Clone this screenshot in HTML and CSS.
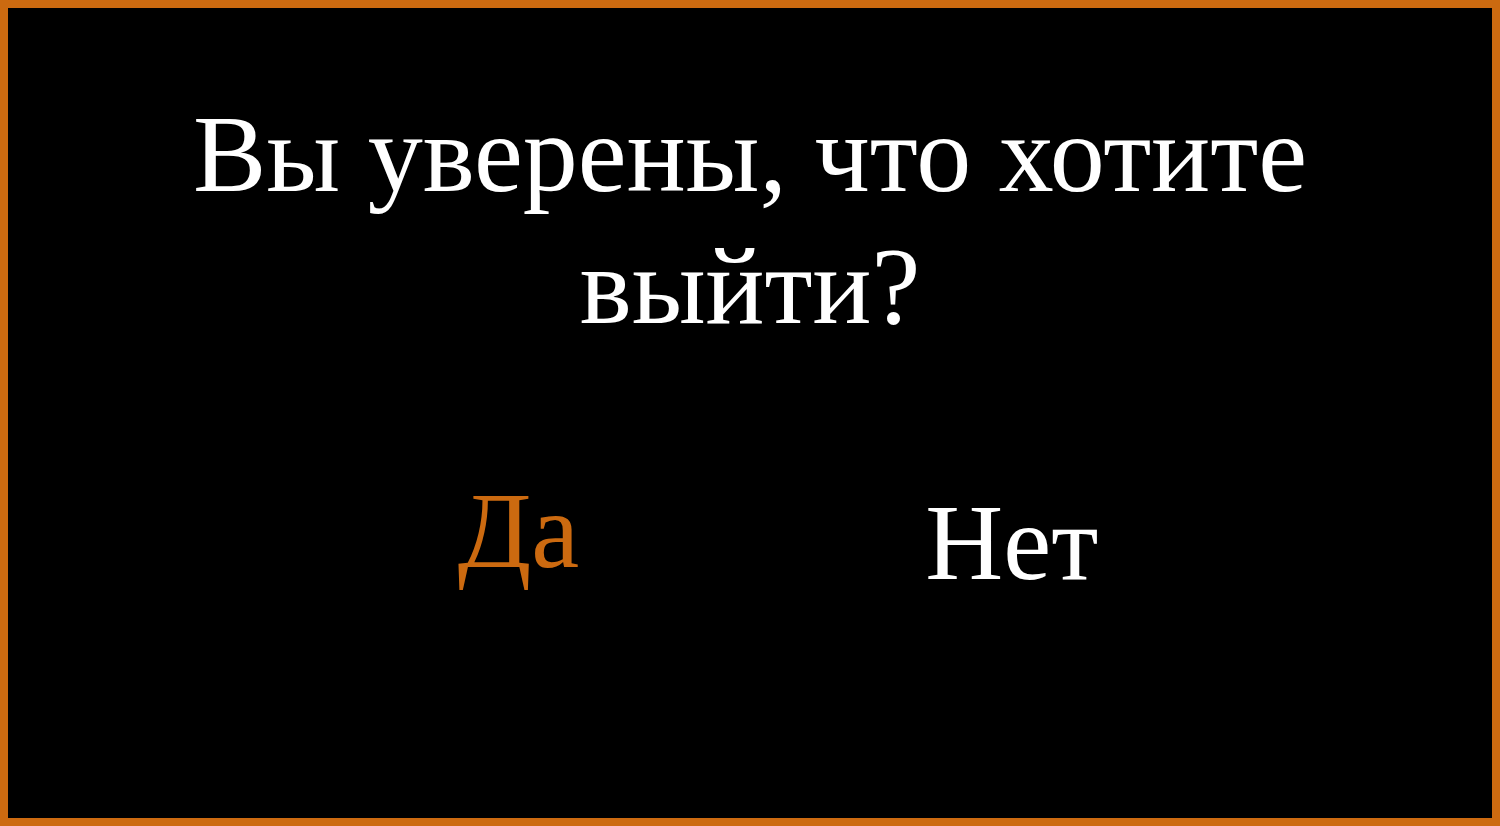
FILE: index.html
```html
<!DOCTYPE html>
<html lang="ru">
<head>
<meta charset="utf-8">
<title>Выход</title>
<link rel="stylesheet" href="styles.css">
</head>
<body>
<div class="dialog">
  <h1 class="question">Вы уверены, что хотите<br>выйти?</h1>
  <div class="choices">
    <button class="choice choice-yes">Да</button>
    <button class="choice choice-no">Нет</button>
  </div>
</div>
</body>
</html>
```
FILE: styles.css
```css
html, body {
  margin: 0;
  padding: 0;
  background: #000;
}
.dialog {
  box-sizing: border-box;
  width: 1500px;
  height: 826px;
  border: 8px solid #cc6a10;
  background: #000;
  display: flex;
  flex-direction: column;
  align-items: center;
  font-family: "Liberation Serif", "Times New Roman", serif;
}
.question {
  margin: 80px 0 0 0;
  font-size: 110px;
  font-weight: normal;
  line-height: 132px;
  color: #fff;
  text-align: center;
}
.choices {
  display: flex;
  align-items: flex-start;
  gap: 346px;
  margin-top: 125px;
  padding-left: 56px;
}
.choice {
  background: none;
  border: none;
  padding: 0;
  font-family: inherit;
  font-size: 108px;
  line-height: 108px;
  cursor: pointer;
}
.choice-yes {
  color: #cc6a10;
}
.choice-no {
  color: #fff;
  margin-top: 12px;
}
```
